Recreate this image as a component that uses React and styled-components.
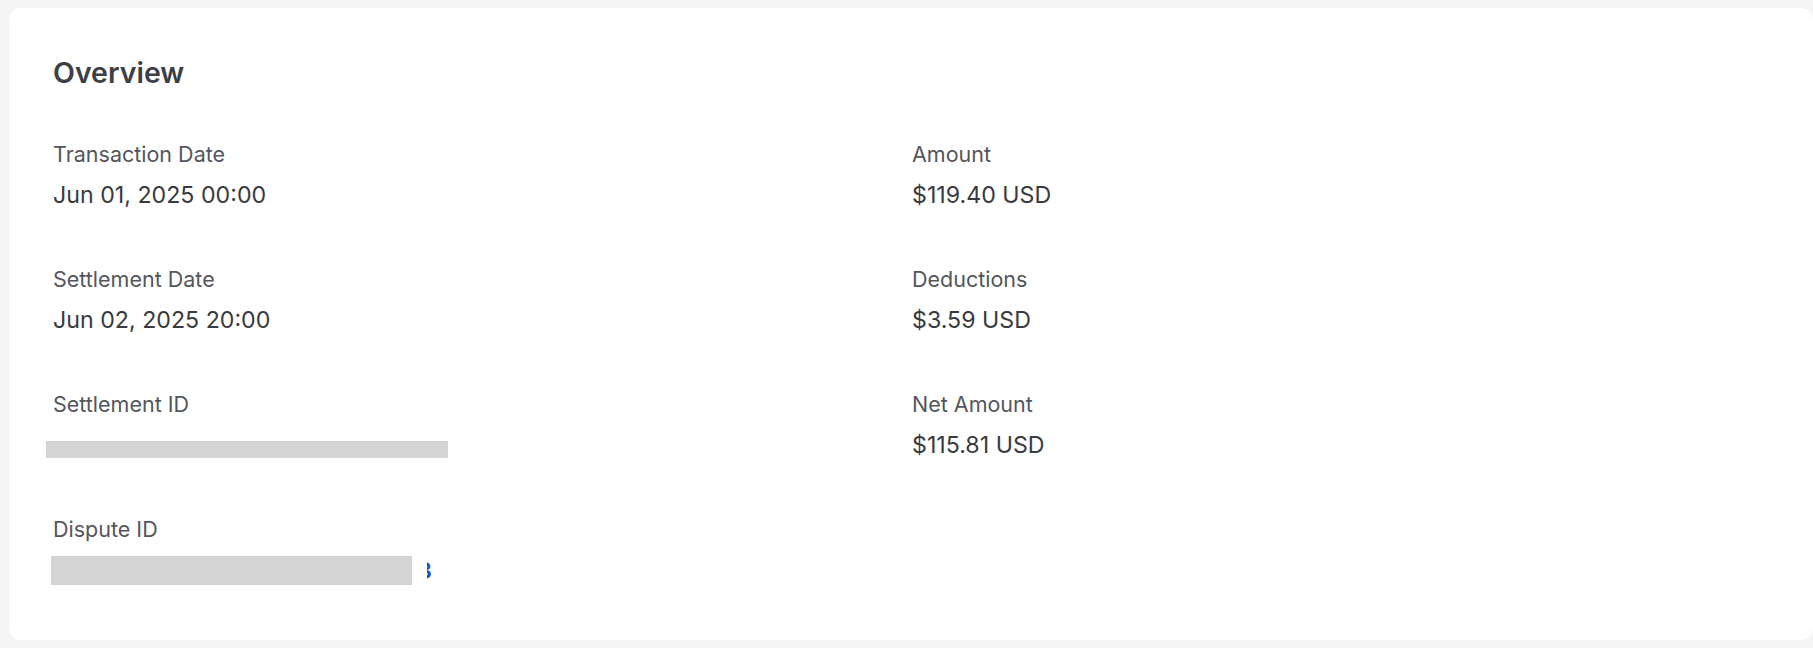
import React from 'react'
import styled, { createGlobalStyle } from 'styled-components';

const GlobalStyle = createGlobalStyle`
    html, body {
        margin: 0;
        padding: 0;
        background: #f5f5f5;
        font-family: Inter, "Noto Sans", "Liberation Sans", sans-serif;
    }
`

const fields = [
    { label: 'Transaction Date', value: 'Jun 01, 2025 00:00' },
    { label: 'Amount', value: '$119.40 USD' },
    { label: 'Settlement Date', value: 'Jun 02, 2025 20:00' },
    { label: 'Deductions', value: '$3.59 USD' },
    { label: 'Settlement ID', redact: { width: 402, height: 17, shift: -7, top: 11 } },
    { label: 'Net Amount', value: '$115.81 USD' },
    { label: 'Dispute ID', redact: { width: 361, height: 29, shift: -2, top: 1 }, link: '3' },
]

const Field = ({ item }) => {
    const { label, value, redact, link } = item;
    return (
        <Item>
            <Label>{label}</Label>
            {redact ? (
                <Hidden>
                    <Redaction $w={redact.width} $h={redact.height} $shift={redact.shift} $top={redact.top} />
                    {link && (
                        <LinkTail href="#">
                            <span>{link}</span>
                        </LinkTail>
                    )}
                </Hidden>
            ) : (
                <Value>{value}</Value>
            )}
        </Item>
    )
}

const App = () => {
    return (
        <Page>
            <GlobalStyle />
            <Card>
                <Title>Overview</Title>
                <Grid>
                    {fields.map((f) => (
                        <Field key={f.label} item={f} />
                    ))}
                </Grid>
            </Card>
        </Page>
    )
}

export default App;

const Page = styled.div`
    padding: 8px 0 8px 9px;
    min-height: 648px;
    box-sizing: border-box;
`

const Card = styled.section`
    background: #ffffff;
    border-radius: 12px;
    padding: 48px 44px 53px 44px;
    height: 632px;
    box-sizing: border-box;
`

const Title = styled.h2`
    margin: 0 0 51px 0;
    font-size: 28.5px;
    line-height: 33px;
    font-weight: 600;
    color: #3c3f45;
`

const Grid = styled.div`
    display: grid;
    grid-template-columns: 859px 1fr;
    row-gap: 55px;
`

const Item = styled.div`
    display: flex;
    flex-direction: column;
    gap: 12px;
`

const Label = styled.div`
    font-size: 21.5px;
    line-height: 28px;
    color: #54565c;
`

const Value = styled.div`
    font-size: 23.2px;
    line-height: 30px;
    color: #393b40;
`

const Hidden = styled.div`
    height: 30px;
    display: flex;
    align-items: flex-start;
`

const Redaction = styled.div`
    width: ${(p) => p.$w}px;
    height: ${(p) => p.$h}px;
    margin-left: ${(p) => p.$shift}px;
    margin-top: ${(p) => p.$top}px;
    background: #d4d4d4;
`

const LinkTail = styled.a`
    display: block;
    width: 4px;
    overflow: hidden;
    margin-left: 15px;
    margin-top: 1px;
    font-size: 23.5px;
    line-height: 30px;
    font-weight: 600;
    color: #1d4fc4;
    text-decoration: none;
    span {
        display: block;
        margin-left: -10px;
    }
`
